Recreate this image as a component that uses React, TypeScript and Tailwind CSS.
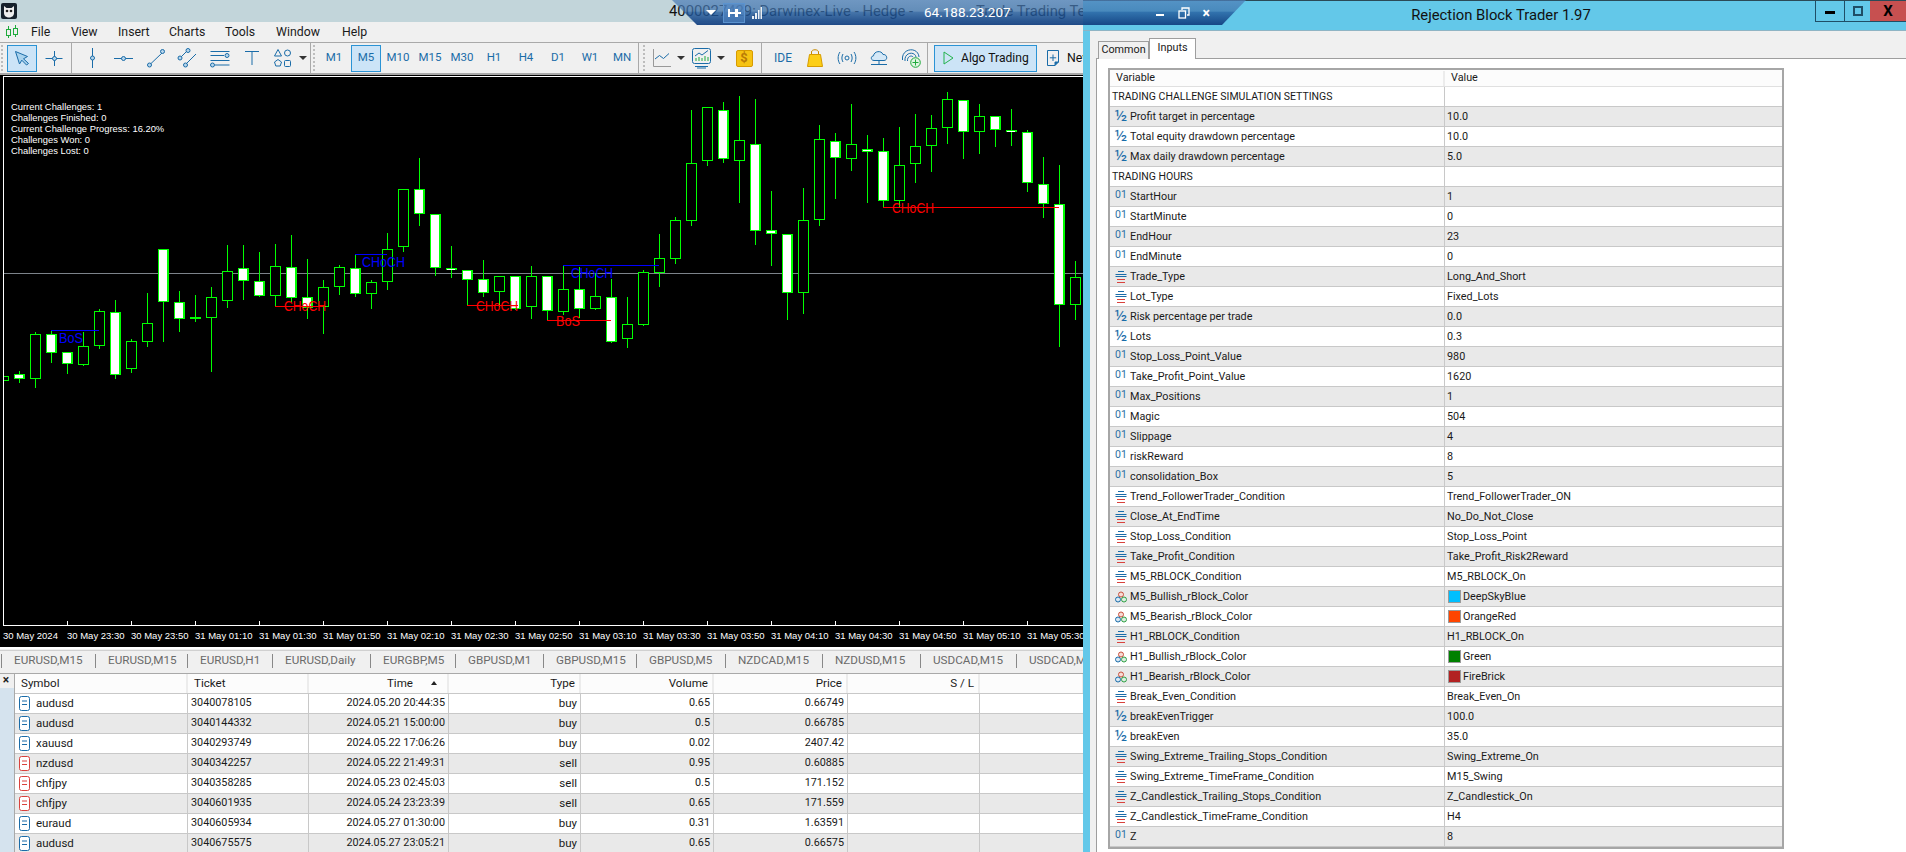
import React from "react";

type C = [number, number, number, number, number];
// wickTop, wickBottom, bodyTop, bodyBottom, kind: 0 hollow, 1 white, 2 solid
const A: C[] = [
  [859,872,859,872,0],[843,880,853,868,1],[727,895,733,868,0],[722,818,733,790,1],[787,851,787,823,1],[727,827,767,824,0],[658,776,664,767,0],[630,866,667,856,1],[747,848,754,838,0],[610,770,700,755,0],[478,755,478,637,1],[603,725,637,688,1],[615,695,682,686,2],[591,845,622,683,0],[465,653,544,634,0],[465,629,535,574,1],[486,620,574,619,1],[462,650,529,619,0],[435,636,532,625,1],[507,686,622,655,1],[570,731,592,652,0],[525,614,532,592,0],[493,622,535,613,1],[570,656,577,613,0],[430,600,478,577,0],[297,485,298,472,0],[205,407,298,373,1],[373,557,373,535,1],[468,563,535,541,1],[541,645,541,571,1],[510,620,568,610,1],[559,650,559,607,0],[559,660,559,658,1],[528,686,559,652,0],
];
const B: C[] = [
  [589,720,589,692,1],[558,705,628,695,0],[560,715,628,688,1],[580,690,649,688,0],[597,790,652,787,1],[651,803,733,776,0],[570,738,577,734,0],[462,620,535,580,0],[411,551,421,538,0],[90,437,250,422,0],[82,257,82,242,0],[66,248,91,238,1],[48,368,181,242,0],[57,494,193,454,1],[333,557,451,463,1],[463,719,463,640,1],[324,701,421,640,0],[135,437,178,421,0],[159,356,184,235,1],[72,272,193,238,0],[165,368,208,215,1],[174,382,214,364,1],[141,380,256,364,0],[102,308,199,253,0],[105,275,145,199,0],[36,191,58,145,0],[61,236,61,157,1],[72,221,109,157,0],[109,200,109,151,1],[87,197,151,157,1],[150,335,157,310,1],[232,413,313,373,1],[255,800,373,676,1],[543,719,592,676,0],
];

const G = "#00ff00";
function Candle({ i, c, off }: { i: number; c: C; off: number }) {
  const x = 3 + 16 * i;
  const [wt, wb, bt, bb, k] = c;
  const y1 = Math.round(wt / 3 + off), y2 = Math.round(wb / 3 + off), t = Math.round(bt / 3 + off), b = Math.round(bb / 3 + off);
  return (
    <g>
      <rect x={x} y={y1} width={1} height={y2 - y1} fill={G} />
      <rect x={x - 5} y={t} width={11} height={Math.max(b - t, 2)} fill={G} />
      {k === 0 && <rect x={x - 4} y={t + 1} width={9} height={Math.max(b - t - 2, 0)} fill="#000" />}
      {k === 1 && <rect x={x - 4} y={t + 1} width={8} height={Math.max(b - t - 2, 1)} fill="#fff" />}
    </g>
  );
}

const Lbl = ({ x, y, w, c, t }: { x: number; y: number; w: number; c: string; t: string }) => (
  <text x={x} y={y} fill={c} fontSize={14} fontFamily="'Liberation Sans',sans-serif" textLength={w} lengthAdjust="spacingAndGlyphs">{t}</text>
);

const Ln = ({ x1, x2, y, c }: { x1: number; x2: number; y: number; c: string }) => <rect x={x1} y={y} width={x2 - x1} height={1} fill={c} />;

function Chart() {
  return (
    <svg width={1083} height={551} viewBox="0 75 1083 551" className="block" shapeRendering="crispEdges">
      <rect x={0} y={75} width={1083} height={551} fill="#000" />
      <rect x={0} y={273} width={1083} height={1} fill="#7c838a" />
      {A.map((c, i) => <Candle key={i} i={i} c={c} off={90} />)}
      {B.map((c, i) => <Candle key={i} i={i + 34} c={c} off={80} />)}
      <rect x={0} y={75} width={3} height={551} fill="#000" />
      <rect x={3} y={76} width={1080} height={1} fill="#fff" />
      <rect x={3} y={76} width={1} height={550} fill="#fff" />
      <rect x={3} y={625} width={1080} height={1} fill="#fff" />
      {Array.from({ length: 16 }).map((_, k) => <rect key={k} x={67 + 64 * k} y={621} width={1} height={4} fill="#fff" />)}
      <Ln x1={51} x2={99} y={330} c="#0000ff" />
      <Ln x1={275} x2={323} y={306} c="#ff0000" />
      <Ln x1={355} x2={387} y={254} c="#0000ff" />
      <Ln x1={467} x2={518} y={305} c="#ff0000" />
      <Ln x1={547} x2={611} y={320} c="#ff0000" />
      <Ln x1={563} x2={659} y={265} c="#0000ff" />
      <Ln x1={883} x2={1059} y={207} c="#ff0000" />
      <g shapeRendering="auto">
        <Lbl x={59} y={343} w={24} c="#0000ff" t="BoS" />
        <Lbl x={284} y={311} w={42} c="#ff0000" t="CHoCH" />
        <Lbl x={362} y={267} w={43} c="#0000ff" t="CHoCH" />
        <Lbl x={476} y={311} w={42} c="#ff0000" t="CHoCH" />
        <Lbl x={556} y={326} w={24} c="#ff0000" t="BoS" />
        <Lbl x={571} y={278} w={42} c="#0000ff" t="CHoCH" />
        <Lbl x={892} y={213} w={42} c="#ff0000" t="CHoCH" />
      </g>
    </svg>
  );
}

const IC = "#1a6ca8";
const Ic = ({ w = 24, h = 24, children }: { w?: number; h?: number; children: React.ReactNode }) => (
  <svg width={w} height={h} viewBox={`0 0 ${w} ${h}`} fill="none" stroke={IC} strokeWidth={1} className="block shrink-0">{children}</svg>
);
const Dot = ({ x, y }: { x: number; y: number }) => <circle cx={x} cy={y} r={2} fill="#b8d6ec" stroke={IC} />;

const Slot = ({ w, children }: { w: number; children?: React.ReactNode }) => (
  <div style={{ width: w }} className="h-[27px] shrink-0 flex items-center justify-center">{children}</div>
);
const Sep = () => <div className="w-px h-[30px] bg-[#a9a9a9] shrink-0" />;
const Grip = () => <div className="w-[2px] h-[26px] shrink-0 border-l-2 border-dotted border-[#bdbdbd]" />;
const Caret = () => <div className="w-0 h-0 border-x-[4px] border-x-transparent border-t-[4px] border-t-[#333]" />;
const TF = ({ t, on }: { t: string; on?: boolean }) => (
  <div className={"h-[27px] shrink-0 flex items-center justify-center text-[11.5px] text-[#1a6ca8] " + (on ? "w-[30px] bg-[#cce4f7] border border-[#2a93d5] mx-px" : "w-[32px]")}>{t}</div>
);

function Toolbar() {
  return (
    <div className="h-[33px] shrink-0 bg-[#f0f0f0] border-t border-b-2 border-t-[#a9a9a9] border-b-[#a9a9a9] flex items-center">
      <div className="shrink-0 ml-px mr-[4px]"><Grip /></div>
      <div className="w-[30px] h-[27px] shrink-0 bg-[#cce4f7] border border-[#2a93d5] flex items-center justify-center">
        <Ic w={18} h={18}><path d="M2.5 2.5 L14.5 7.5 L10.5 9.8 L15.5 14.5 L13.5 16 L8.8 11.2 L6.5 15 Z" fill="#a9d3ee" /></Ic>
      </div>
      <Slot w={34}><Ic w={20} h={20}><path d="M1.5 10.5H18.5M10.5 3V18" /><Dot x={10.5} y={10.5} /></Ic></Slot>
      <div className="shrink-0 mr-[4px]"><Sep /></div>
      <Slot w={32}><Ic w={20} h={22}><path d="M10.5 1V21" /><Dot x={10.5} y={11} /></Ic></Slot>
      <Slot w={32}><Ic w={22} h={20}><path d="M1 10.5H20" /><Dot x={10.5} y={10.5} /></Ic></Slot>
      <Slot w={32}><Ic w={20} h={20}><path d="M4.5 16L16 5" /><Dot x={3.5} y={17} /><Dot x={16.5} y={3.5} /></Ic></Slot>
      <Slot w={32}><Ic w={22} h={20}><path d="M4 9L10 3M9 16L19 6" /><Dot x={3} y={10} /><Dot x={11} y={2.5} /><Dot x={8.5} y={17} /></Ic></Slot>
      <Slot w={32}><Ic w={20} h={20}><path d="M0.5 3.5H19.5M0.5 7.5H14M0.5 12.5H19.5M5 17H19.5" /><Dot x={17} y={7.5} /><Dot x={2.5} y={17} /></Ic></Slot>
      <Slot w={32}><Ic w={16} h={18}><path d="M1 2.5H15M8 2.5V16" /></Ic></Slot>
      <Slot w={30}><Ic w={20} h={20}><path d="M5 1.5L8.5 8H1.5Z" /><circle cx={14.5} cy={5} r={3} /><path d="M5 11.5L8.5 14L7.2 18H2.8L1.5 14Z" /><rect x={11.5} y={12.5} width={6} height={6} rx={1} /></Ic></Slot>
      <Slot w={10}><Caret /></Slot>
      <div className="shrink-0 ml-[2px] mr-[2px]"><Sep /></div>
      <Grip />
      <div className="w-[3px] shrink-0" />
      {["M1", "M5", "M10", "M15", "M30", "H1", "H4", "D1", "W1", "MN"].map((t) => <TF key={t} t={t} on={t === "M5"} />)}
      <Sep />
      <div className="shrink-0 ml-[4px] mr-[6px]"><Grip /></div>
      <Slot w={22}><Ic w={20} h={20}><path d="M1.5 1V18.5H19" stroke="#999" /><path d="M3 11L7.5 7.5L11.5 10.5L17 5.5" /></Ic></Slot>
      <Slot w={16}><Caret /></Slot>
      <Slot w={26}><Ic w={22} h={22}><rect x={1.5} y={1.5} width={18} height={15} rx={2} /><path d="M4 19.5H17M6 21H15" /><path d="M4 9L8 6L11 8L17 3.5" stroke="#1a6ca8" /><path d="M5 14V11M8 14V10M11 14V11M14 14V9M17 14V10" stroke="#1faa3c" /></Ic></Slot>
      <Slot w={12}><Caret /></Slot>
      <Slot w={34}>
        <div className="w-[17px] h-[17px] bg-[#f6c313] border border-[#d89b00] rounded-[2px] flex items-center justify-center text-[13px] font-bold text-[#b97a06]">$</div>
      </Slot>
      <Sep />
      <Slot w={42}><span className="text-[12px] text-[#1a6ca8]">IDE</span></Slot>
      <Slot w={22}><Ic w={18} h={20}><path d="M5.5 6V4C5.5 1 12.5 1 12.5 4V6" stroke="#c78a00" /><path d="M3.5 6.5H14.5L16.5 18.5H1.5Z" fill="#fcce17" stroke="#d79c00" /></Ic></Slot>
      <div className="w-[5px] shrink-0" />
      <Slot w={32}><Ic w={20} h={16}><circle cx={10} cy={8} r={2} /><path d="M6 4C4.5 6.5 4.5 9.5 6 12M14 4C15.5 6.5 15.5 9.5 14 12M3 2C0.5 5.5 0.5 10.5 3 14M17 2C19.5 5.5 19.5 10.5 17 14" /></Ic></Slot>
      <Slot w={32}><Ic w={20} h={20}><path d="M5 12.5C1.5 12.5 1.5 8 4.5 7.8C5 3 12.5 2 14 6.5C18.5 6 19 12.5 15 12.5Z" fill="#d4e8f7" /><path d="M10 12.5V16M2 16.5H18" /></Ic></Slot>
      <Slot w={32}><Ic w={22} h={22}><path d="M2.5 13C1 1 18 -1 19 10M5 14C4 5 15 4 16 10M7.5 14C7 9 12 8 13 10" /><circle cx={15.5} cy={15.5} r={4.8} fill="#dff5e2" stroke="#1faa3c" /><path d="M15.5 12.5V18.5M12.5 15.5H18.5" stroke="#1faa3c" /></Ic></Slot>
      <Sep />
      <div className="w-[6px] shrink-0" />
      <div className="w-[103px] h-[27px] shrink-0 bg-[#cce4f7] border border-[#2a93d5] flex items-center">
        <div className="shrink-0 ml-[8px] mr-[7px]"><Ic w={11} h={14}><path d="M1 1L10 7L1 13Z" stroke="#22b24c" /></Ic></div>
        <span className="text-[12.1px] text-[#111] whitespace-nowrap">Algo Trading</span>
      </div>
      <div className="shrink-0 ml-[9px] mr-[7px]"><Ic w={14} h={18}><path d="M1.5 1.5H12.5V13L9 16.5H1.5Z" /><path d="M7 5.5V12M3.8 8.8H10.2" /><path d="M9 16.5V13H12.5" fill="#1a6ca8" /></Ic></div>
      <span className="shrink-0 text-[12.3px] text-[#111] whitespace-nowrap">New Order</span>
    </div>
  );
}

const axis = ["30 May 2024", "30 May 23:30", "30 May 23:50", "31 May 01:10", "31 May 01:30", "31 May 01:50", "31 May 02:10", "31 May 02:30", "31 May 02:50", "31 May 03:10", "31 May 03:30", "31 May 03:50", "31 May 04:10", "31 May 04:30", "31 May 04:50", "31 May 05:10", "31 May 05:30"];
const tabs: [string, number][] = [["EURUSD,M15", 94], ["EURUSD,M15", 92], ["EURUSD,H1", 85], ["EURUSD,Daily", 98], ["EURGBP,M5", 85], ["GBPUSD,M1", 88], ["GBPUSD,M15", 93], ["GBPUSD,M5", 89], ["NZDCAD,M15", 97], ["NZDUSD,M15", 98], ["USDCAD,M15", 96], ["USDCAD,M15", 96]];
const cols = [173, 121, 140, 132, 133, 134, 132, 104];
const orders = [
  ["audusd", "3040078105", "2024.05.20 20:44:35", "buy", "0.65", "0.66749"],
  ["audusd", "3040144332", "2024.05.21 15:00:00", "buy", "0.5", "0.66785"],
  ["xauusd", "3040293749", "2024.05.22 17:06:26", "buy", "0.02", "2407.42"],
  ["nzdusd", "3040342257", "2024.05.22 21:49:31", "sell", "0.95", "0.60885"],
  ["chfjpy", "3040358285", "2024.05.23 02:45:03", "sell", "0.5", "171.152"],
  ["chfjpy", "3040601935", "2024.05.24 23:23:39", "sell", "0.65", "171.559"],
  ["euraud", "3040605934", "2024.05.27 01:30:00", "buy", "0.31", "1.63591"],
  ["audusd", "3040675575", "2024.05.27 23:05:21", "buy", "0.65", "0.66575"],
];

function OrderIcon({ sell }: { sell: boolean }) {
  const c = sell ? "#d9413c" : "#1a6ca8";
  return (
    <svg width={11} height={15} viewBox="0 0 11 15" fill="none" className="block shrink-0">
      <rect x={0.5} y={0.5} width={10} height={14} rx={2} fill="#fff" stroke={c} />
      <path d="M3 5H8M3 8.5H8" stroke={c} />
    </svg>
  );
}

function Orders() {
  const hd = ["Symbol", "Ticket", "Time", "Type", "Volume", "Price", "S / L", ""];
  return (
    <div className="flex-1 min-h-0 flex overflow-hidden bg-[#f0f0f0]">
      <div className="w-[14px] shrink-0 bg-[#d5e3ee] border-t border-[#a9a9a9]">
        <div className="h-[14px] bg-[#f0f0f0] text-[12px] leading-[13px] font-bold text-center text-[#222] pr-[2px]">×</div>
      </div>
      <div className="flex-1 border-t border-l border-[#a9a9a9]">
        <div className="flex h-[19px] bg-[#fcfcfc] text-[11.6px]">
          {hd.map((h, i) => (
            <div key={i} style={{ width: cols[i] }} className={"shrink-0 border-r-2 border-[#ececec] flex items-center h-full " + (i < 2 ? "pl-[6px]" : "justify-end pr-[4px]")}>
              {i === 2 ? (
                <div className="flex items-center">
                  <span>Time</span>
                  <div className="ml-[18px] mr-[6px] w-0 h-0 border-x-[3px] border-x-transparent border-b-[4px] border-b-[#222]" />
                </div>
              ) : h}
            </div>
          ))}
        </div>
        {orders.map((r, n) => (
          <div key={n} className={"flex h-[20px] border-t border-[#c8c8c8] " + (n % 2 ? "bg-[#e9e9e9]" : "bg-white")}>
            <div style={{ width: cols[0] }} className="shrink-0 border-r border-[#c8c8c8] flex items-center pl-[4px] gap-[6px]">
              <OrderIcon sell={r[3] === "sell"} />
              <span className="text-[11.5px]">{r[0]}</span>
            </div>
            <div style={{ width: cols[1] }} className="shrink-0 border-r border-[#c8c8c8] flex items-center pl-[3px]">{r[1]}</div>
            {[r[2], r[3], r[4], r[5], "", ""].map((v, i) => (
              <div key={i} style={{ width: cols[i + 2] }} className={"shrink-0 border-r border-[#c8c8c8] flex items-center justify-end pr-[3px] " + (i === 1 ? "text-[11.5px]" : "")}>{v}</div>
            ))}
          </div>
        ))}
      </div>
    </div>
  );
}

function Half() {
  return <span className="w-[14px] shrink-0 text-[16.5px] leading-[18px] text-[#1a6ca8] text-center -mt-[2px]">½</span>;
}
function Int() {
  return <span className="w-[14px] shrink-0 text-[10.5px] leading-[14px] text-[#2a6fa3] text-center -mt-[3px]">01</span>;
}
function En() {
  return (
    <svg width={14} height={14} viewBox="0 0 14 14" fill="none" className="block shrink-0">
      <path d="M4 1.5H10M1.5 4.5H12.5" stroke="#1a6ca8" />
      <path d="M1.5 6.5H12.5" stroke="#1a6ca8" />
      <path d="M3 9.5H11M3 12.5H11" stroke="#d9413c" />
    </svg>
  );
}
function Clr() {
  return (
    <svg width={14} height={14} viewBox="0 0 14 14" fill="none" className="block shrink-0">
      <circle cx={7} cy={4.5} r={2.5} stroke="#c9503c" fill="#f6dcd6" />
      <circle cx={4} cy={9.5} r={2.5} stroke="#1a6ca8" fill="#d8e8f4" />
      <circle cx={10} cy={9.5} r={2.5} stroke="#2f9e44" fill="#dcefdf" />
    </svg>
  );
}

type P = ["s" | "h" | "i" | "e" | "c", string, string, string?];
const params: P[] = [
  ["s", "TRADING CHALLENGE SIMULATION SETTINGS", ""],
  ["h", "Profit target in percentage", "10.0"],
  ["h", "Total equity drawdown percentage", "10.0"],
  ["h", "Max daily drawdown percentage", "5.0"],
  ["s", "TRADING HOURS", ""],
  ["i", "StartHour", "1"],
  ["i", "StartMinute", "0"],
  ["i", "EndHour", "23"],
  ["i", "EndMinute", "0"],
  ["e", "Trade_Type", "Long_And_Short"],
  ["e", "Lot_Type", "Fixed_Lots"],
  ["h", "Risk percentage per trade", "0.0"],
  ["h", "Lots", "0.3"],
  ["i", "Stop_Loss_Point_Value", "980"],
  ["i", "Take_Profit_Point_Value", "1620"],
  ["i", "Max_Positions", "1"],
  ["i", "Magic", "504"],
  ["i", "Slippage", "4"],
  ["i", "riskReward", "8"],
  ["i", "consolidation_Box", "5"],
  ["e", "Trend_FollowerTrader_Condition", "Trend_FollowerTrader_ON"],
  ["e", "Close_At_EndTime", "No_Do_Not_Close"],
  ["e", "Stop_Loss_Condition", "Stop_Loss_Point"],
  ["e", "Take_Profit_Condition", "Take_Profit_Risk2Reward"],
  ["e", "M5_RBLOCK_Condition", "M5_RBLOCK_On"],
  ["c", "M5_Bullish_rBlock_Color", "DeepSkyBlue", "#00bfff"],
  ["c", "M5_Bearish_rBlock_Color", "OrangeRed", "#ff4500"],
  ["e", "H1_RBLOCK_Condition", "H1_RBLOCK_On"],
  ["c", "H1_Bullish_rBlock_Color", "Green", "#008000"],
  ["c", "H1_Bearish_rBlock_Color", "FireBrick", "#b22222"],
  ["e", "Break_Even_Condition", "Break_Even_On"],
  ["h", "breakEvenTrigger", "100.0"],
  ["h", "breakEven", "35.0"],
  ["e", "Swing_Extreme_Trailing_Stops_Condition", "Swing_Extreme_On"],
  ["e", "Swing_Extreme_TimeFrame_Condition", "M15_Swing"],
  ["e", "Z_Candlestick_Trailing_Stops_Condition", "Z_Candlestick_On"],
  ["e", "Z_Candlestick_TimeFrame_Condition", "H4"],
  ["i", "Z", "8"],
];

function ParamRow({ p, n }: { p: P; n: number }) {
  const [k, name, val, sw] = p;
  return (
    <div className={"flex h-[20px] border-b border-[#c8c8c8] " + (n % 2 ? "bg-[#e9e9e9]" : "bg-white")}>
      <div className={"w-[335px] shrink-0 border-r border-[#c8c8c8] flex items-center whitespace-nowrap " + (k === "s" ? "pl-[2px] text-[10.5px]" : "pl-[4px] gap-[2px]")}>
        {k === "h" && <Half />}
        {k === "i" && <Int />}
        {k === "e" && <En />}
        {k === "c" && <Clr />}
        <span className="pt-px">{name}</span>
      </div>
      <div className="flex-1 flex items-center pl-[2px] gap-[2px]">
        {sw && <div style={{ backgroundColor: sw }} className="ml-px w-[13px] h-[13px] border border-[#9a9a9a]" />}
        <span className="pt-px">{val}</span>
      </div>
    </div>
  );
}

function Win() {
  return (
    <div className="flex-1 min-w-0 flex flex-col bg-[#63c8e9] pl-[7px]">
      <div className="relative -ml-[7px] h-[31px] shrink-0 bg-[#63c8e9] border-t border-[#2b4a57] border-b border-b-[#8fb4c4] flex items-center justify-center pl-[13px] text-[14.8px] text-[#111]">
        Rejection Block Trader 1.97
        <div className="absolute top-0 right-0 h-[21px] flex border-b border-l border-[#1f4e66]">
          <div className="w-[29px] border-r border-[#1f4e66] flex items-center justify-center"><div className="w-[10px] h-[3px] mt-[3px] bg-black" /></div>
          <div className="w-[25px] flex items-center justify-center"><div className="w-[10px] h-[10px] border-2 border-[#1f4e66]" /></div>
          <div className="w-[36px] bg-[#c75050] flex items-center justify-center text-[15px] font-bold text-black">X</div>
        </div>
      </div>
      <div className="flex-1 min-h-0 bg-[#f0f0f0] flex flex-col">
        <div className="h-[27px] shrink-0 pl-[8px] flex items-end relative z-10">
          <div className="w-[51px] h-[18px] -mb-px bg-[#f0f0f0] border border-b-0 border-[#9e9e9e] flex items-center justify-center">Common</div>
          <div className="w-[47px] h-[21px] -mb-px bg-white border border-b-0 border-[#9e9e9e] flex items-start justify-center pt-[1px]">Inputs</div>
        </div>
        <div className="flex-1 min-h-0 ml-[6px] bg-white border-t border-l border-[#9e9e9e] pt-[9px] pl-[11px] overflow-hidden">
          <div className="w-[676px] border-2 border-[#a6a6a6]">
            <div className="flex h-[17px] bg-[#fcfcfc] border-b border-[#e0e0e0] pt-px">
              <div className="w-[335px] shrink-0 border-r-2 border-[#ececec] pl-[6px] flex items-center">Variable</div>
              <div className="flex-1 pl-[6px] flex items-center">Value</div>
            </div>
            {params.map((p, n) => <ParamRow key={n} p={p} n={n} />)}
          </div>
        </div>
      </div>
    </div>
  );
}

function Rdp() {
  return (
    <div className="absolute left-[672px] top-0 w-[574px] h-[25px] z-20 [clip-path:polygon(0_0,100%_0,calc(100%-24px)_100%,25px_100%)] bg-[linear-gradient(#4f7fb8b8_0%,#3f72acb8_44%,#235a9cc8_50%,#123f80f0_100%)] flex items-center pl-[34px] pr-[36px] text-white">
      <div className="w-0 h-0 border-x-[5px] border-x-transparent border-t-[5px] border-t-white" />
      <div className="ml-[7px] w-[22px] h-[20px] border border-[#5b93cf] bg-[#4f86c4a0] flex items-center justify-center">
        <svg width={14} height={10} viewBox="0 0 14 10" className="block"><path d="M1 1V9H3V6H8V9H11V1H8V4H3V1Z M11 4H14V6H11Z" fill="#fff" /></svg>
      </div>
      <svg width={10} height={12} viewBox="0 0 10 12" className="block ml-[7px]"><path d="M0 9H2V12H0ZM3 6H5V12H3ZM6 3H7.5V12H6ZM8.5 0H10V12H8.5Z" fill="#fff" opacity={0.9} /></svg>
      <span className="ml-[162px] text-[13.5px] whitespace-nowrap">64.188.23.207</span>
      <div className="ml-auto flex items-center">
        <div className="w-[8px] h-[2px] bg-white mt-[5px]" />
        <svg width={12} height={12} viewBox="0 0 12 12" fill="none" stroke="#fff" strokeWidth={1.3} className="block ml-[14px]"><rect x={1} y={4} width={6.5} height={7} /><path d="M4 3V1H11V8H9" /></svg>
        <div className="ml-[13px] text-[14px] leading-none font-bold">×</div>
      </div>
    </div>
  );
}

export default function App() {
  return (
    <div className="relative w-[1906px] h-[852px] overflow-hidden flex bg-white font-[Roboto,sans-serif] text-[10.8px] text-[#1a1a1a]">
      <div className="w-[1083px] shrink-0 flex flex-col overflow-hidden">
        <div className="h-[22px] shrink-0 bg-[#c2d5da] flex items-center whitespace-nowrap text-[14.8px] text-[#111]">
          <div className="shrink-0 ml-px w-[16px] h-[16px] rounded-[2px] bg-[#15202b] flex items-center justify-center">
            <svg width={12} height={13} viewBox="0 0 12 13" className="block"><path d="M1 1L3.5 3H8.5L11 1V8C11 11 8.5 12.5 6 12.5S1 11 1 8Z" fill="#eee" /><circle cx={4} cy={6} r={1.3} fill="#222" /><circle cx={8} cy={6} r={1.3} fill="#222" /></svg>
          </div>
          <span className="shrink-0 ml-[652px] w-[307px]">4000027429: Darwinex-Live - Hedge -</span>
          <span className="shrink-0">Trade Trading Technologies</span>
        </div>
        <div className="h-[20px] shrink-0 bg-[#f0f0f0] flex items-center text-[12.3px] text-[#1a1a1a]">
          <svg width={14} height={14} viewBox="0 0 14 14" fill="none" stroke="#1faa3c" className="block ml-[5px]"><path d="M3.5 1V13M10.5 0V12" /><rect x={1.5} y={4.5} width={4} height={6} fill="#f0f0f0" /><rect x={8.5} y={3.5} width={4} height={6} fill="#f0f0f0" /></svg>
          <span className="ml-[12px] w-[40px]">File</span>
          <span className="w-[47px]">View</span>
          <span className="w-[51px]">Insert</span>
          <span className="w-[56px]">Charts</span>
          <span className="w-[51px]">Tools</span>
          <span className="w-[66px]">Window</span>
          <span>Help</span>
        </div>
        <Toolbar />
        <div className="relative h-[572px] shrink-0 bg-black">
          <Chart />
          <div className="absolute left-[11px] top-[26px] text-white text-[9.4px] leading-[11px] font-[Liberation_Sans,sans-serif]">
            <div>Current Challenges: 1</div>
            <div>Challenges Finished: 0</div>
            <div>Current Challenge Progress: 16.20%</div>
            <div>Challenges Won: 0</div>
            <div>Challenges Lost: 0</div>
          </div>
          <div className="h-[21px] flex items-center pl-[3px] text-white text-[9.5px] whitespace-nowrap font-[Liberation_Sans,sans-serif]">
            {axis.map((a) => <div key={a} className="w-[64px] shrink-0">{a}</div>)}
          </div>
        </div>
        <div className="h-[26px] shrink-0 bg-[#f0f0f0] border-t-2 border-white flex flex-col">
          <div className="h-[20px] mt-px border-t border-[#d0d0d0] flex items-center pl-px text-[#6a6a6a] text-[11.7px] whitespace-nowrap">
            {tabs.map(([t, w], i) => (
              <div key={i} style={{ width: w }} className="shrink-0 h-[14px] border-l border-[#888] pl-[12px] flex items-center">{t}</div>
            ))}
          </div>
        </div>
        <Orders />
      </div>
      <Win />
      <Rdp />
    </div>
  );
}
